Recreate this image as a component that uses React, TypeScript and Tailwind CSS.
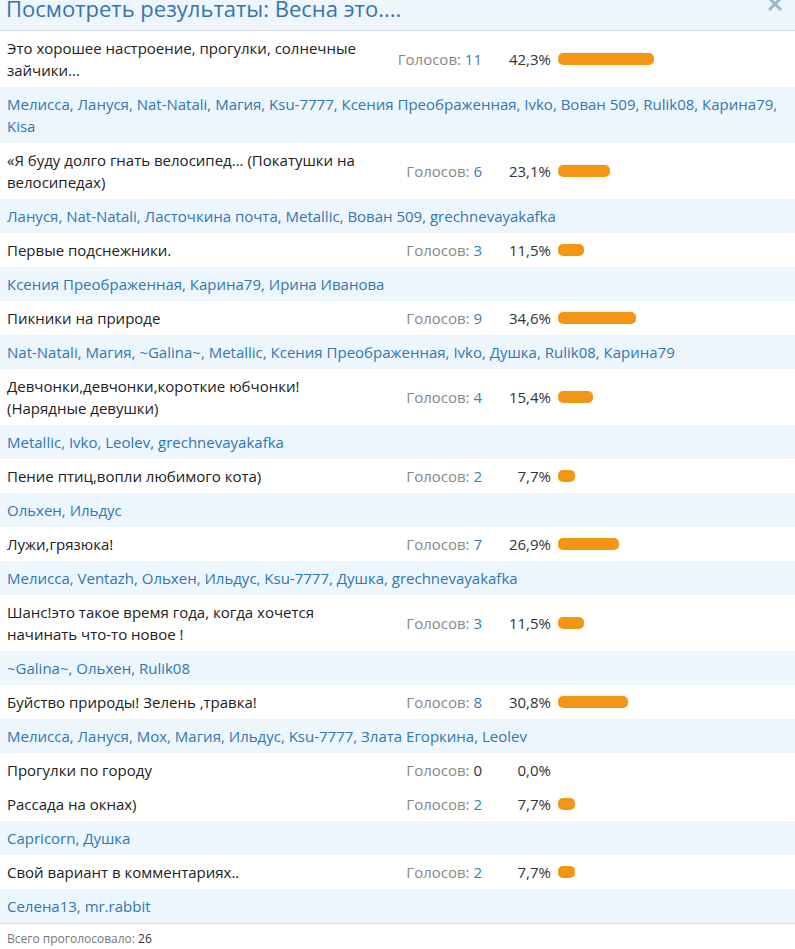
type Option = { text: string; votes: number; pct: string; names?: string };

const options: Option[] = [
  {
    text: 'Это хорошее настроение, прогулки, солнечные зайчики...',
    votes: 11,
    pct: '42,3',
    names: 'Мелисса, Лануся, Nat-Natali, Магия, Ksu-7777, Ксения Преображенная, Ivko, Вован 509, Rulik08, Карина79, Kisa',
  },
  {
    text: '«Я буду долго гнать велосипед... (Покатушки на велосипедах)',
    votes: 6,
    pct: '23,1',
    names: 'Лануся, Nat-Natali, Ласточкина почта, Metallic, Вован 509, grechnevayakafka',
  },
  { text: 'Первые подснежники.', votes: 3, pct: '11,5', names: 'Ксения Преображенная, Карина79, Ирина Иванова' },
  {
    text: 'Пикники на природе',
    votes: 9,
    pct: '34,6',
    names: 'Nat-Natali, Магия, ~Galina~, Metallic, Ксения Преображенная, Ivko, Душка, Rulik08, Карина79',
  },
  {
    text: 'Девчонки,девчонки,короткие юбчонки! (Нарядные девушки)',
    votes: 4,
    pct: '15,4',
    names: 'Metallic, Ivko, Leolev, grechnevayakafka',
  },
  { text: 'Пение птиц,вопли любимого кота)', votes: 2, pct: '7,7', names: 'Ольхен, Ильдус' },
  {
    text: 'Лужи,грязюка!',
    votes: 7,
    pct: '26,9',
    names: 'Мелисса, Ventazh, Ольхен, Ильдус, Ksu-7777, Душка, grechnevayakafka',
  },
  {
    text: 'Шанс!это такое время года, когда хочется начинать что-то новое !',
    votes: 3,
    pct: '11,5',
    names: '~Galina~, Ольхен, Rulik08',
  },
  {
    text: 'Буйство природы! Зелень ,травка!',
    votes: 8,
    pct: '30,8',
    names: 'Мелисса, Лануся, Мох, Магия, Ильдус, Ksu-7777, Злата Егоркина, Leolev',
  },
  { text: 'Прогулки по городу', votes: 0, pct: '0,0' },
  { text: 'Рассада на окнах)', votes: 2, pct: '7,7', names: 'Capricorn, Душка' },
  { text: 'Свой вариант в комментариях..', votes: 2, pct: '7,7', names: 'Селена13, mr.rabbit' },
];

function OptionRow({ o }: { o: Option }) {
  const width = parseFloat(o.pct.replace(',', '.')) * 2.26;
  return (
    <>
      <div className="flex items-center bg-white py-[6px] leading-[22px]">
        <div className="w-[390px] shrink-0 pl-[7px] pr-[22px] text-[#222]">{o.text}</div>
        <div className="w-[92px] shrink-0 text-right text-[#888]">
          Голосов: <span className={o.votes ? 'text-[#3a7db6]' : 'text-[#333]'}>{o.votes}</span>
        </div>
        <div className="w-[69px] shrink-0 text-right text-[#333]">{o.pct}%</div>
        <div className="ml-[7px] flex-1">
          {o.votes > 0 && <div className="h-[12px] rounded-[5px] bg-[#f39614]" style={{ width }} />}
        </div>
      </div>
      {o.names && (
        <div className="bg-[#edf5fd] px-[7px] py-[6px] leading-[22px] text-[#2f78b3]">{o.names}</div>
      )}
    </>
  );
}

export default function App() {
  return (
    <div className="h-[949px] w-[795px] overflow-hidden bg-white font-['Open_Sans',sans-serif] text-[15px]">
      <header className="relative h-[31px] overflow-hidden border-b border-[#d5dde6] bg-[#eef5fc]">
        <h1 className="-mt-[8px] pl-[6px] text-[22px] font-normal leading-[32px] text-[#3674b0]">
          Посмотреть результаты: Весна это....
        </h1>
        <svg className="absolute right-[12px] -top-[4px]" width="16" height="16" viewBox="0 0 16 16">
          <path d="M2 2 L14 14 M14 2 L2 14" stroke="#9fb6cd" strokeWidth="3" />
        </svg>
      </header>
      <div className="flex flex-col">
        {options.map((o, i) => (
          <OptionRow key={i} o={o} />
        ))}
      </div>
      <footer className="border-t border-[#d8dde3] px-[7px] py-[6px] text-[12px] text-[#777]">
        Всего проголосовало: <span className="text-[#333]">26</span>
      </footer>
    </div>
  );
}
